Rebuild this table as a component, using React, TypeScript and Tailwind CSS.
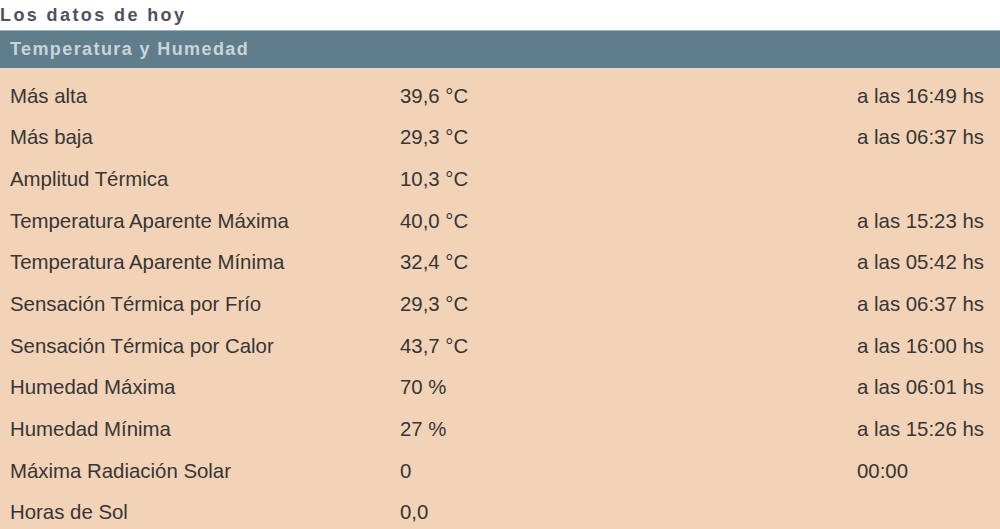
const rows: [string, string, string][] = [
  ['Más alta', '39,6 °C', 'a las 16:49 hs'],
  ['Más baja', '29,3 °C', 'a las 06:37 hs'],
  ['Amplitud Térmica', '10,3 °C', ''],
  ['Temperatura Aparente Máxima', '40,0 °C', 'a las 15:23 hs'],
  ['Temperatura Aparente Mínima', '32,4 °C', 'a las 05:42 hs'],
  ['Sensación Térmica por Frío', '29,3 °C', 'a las 06:37 hs'],
  ['Sensación Térmica por Calor', '43,7 °C', 'a las 16:00 hs'],
  ['Humedad Máxima', '70 %', 'a las 06:01 hs'],
  ['Humedad Mínima', '27 %', 'a las 15:26 hs'],
  ['Máxima Radiación Solar', '0', '00:00'],
  ['Horas de Sol', '0,0', ''],
];

export default function App() {
  return (
    <div className="w-[1000px] h-[529px] overflow-hidden bg-white font-['Liberation_Sans',Arial,sans-serif]">
      <h2 className="h-[30px] pt-[4px] text-[18px] leading-[22px] font-bold tracking-[2.4px] text-[#505060]">
        Los datos de hoy
      </h2>
      <div className="bg-[#f2d3b7]">
        <div className="h-[39px] border-t border-[#a3b3ba] border-b border-b-[#e9d2bf] bg-[#607d8b] pl-[10px] flex items-center">
          <span className="text-[18px] font-bold tracking-[1.4px] text-[#c9d3d8]">
            Temperatura y Humedad
          </span>
        </div>
        <div className="pt-[6px]">
          {rows.map(([label, value, time]) => (
            <div key={label} className="h-[41.7px] flex items-center text-[20.4px] text-[#363636]">
              <div className="w-[400px] pl-[10px]">{label}</div>
              <div className="w-[457px]">{value}</div>
              <div className="flex-1">{time}</div>
            </div>
          ))}
        </div>
      </div>
    </div>
  );
}
